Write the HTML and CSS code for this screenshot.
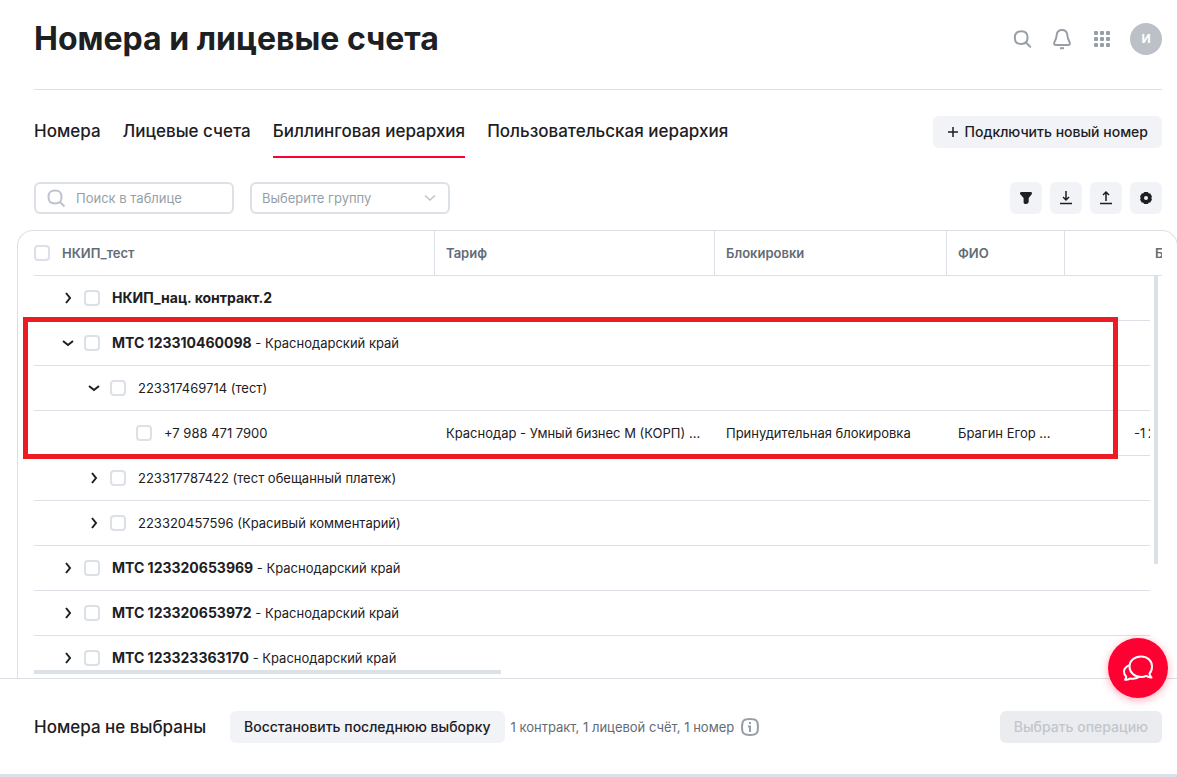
FILE: index.html
```html
<!DOCTYPE html>
<html lang="ru">
<head>
<meta charset="utf-8">
<title>Номера и лицевые счета</title>
<link rel="stylesheet" href="styles.css">
</head>
<body>
<div class="page">
  <header class="header">
    <h1 class="title">Номера и лицевые счета</h1>
    <div class="header-actions">
      <button class="icon-link" type="button" aria-label="Поиск">
        <svg width="24" height="24" viewBox="0 0 24 24" fill="none" stroke="#969fa8" stroke-width="2"><path d="M11.200 4.200c4.600 0 6.400 1.800 6.400 6.400s-1.800 6.400-6.400 6.400-6.400-1.800-6.400-6.400 1.800-6.400 6.400-6.400z"/><path d="M16 15.500l4.200 4.200" stroke-linecap="round"/></svg>
      </button>
      <button class="icon-link" type="button" aria-label="Уведомления">
        <svg width="24" height="24" viewBox="0 0 24 24" fill="none" stroke="#969fa8" stroke-width="2"><path d="M12 3c-3.500 0-5 2-5.300 5-.3 3.200-.9 4.500-2 6.400-1.200 2.200-.6 3.600 1.500 3.600h11.600c2.100 0 2.700-1.400 1.500-3.600-1.100-1.900-1.700-3.200-2-6.400-.3-3-1.800-5-5.300-5z"/><path d="M10 21.200h4"/></svg>
      </button>
      <button class="icon-link" type="button" aria-label="Сервисы">
        <svg width="24" height="24" viewBox="0 0 24 24" fill="#969fa8"><rect x="4" y="4" width="4" height="4" rx="1"/><rect x="10" y="4" width="4" height="4" rx="1"/><rect x="16" y="4" width="4" height="4" rx="1"/><rect x="4" y="10" width="4" height="4" rx="1"/><rect x="10" y="10" width="4" height="4" rx="1"/><rect x="16" y="10" width="4" height="4" rx="1"/><rect x="4" y="16" width="4" height="4" rx="1"/><rect x="10" y="16" width="4" height="4" rx="1"/><rect x="16" y="16" width="4" height="4" rx="1"/></svg>
      </button>
      <button class="avatar" type="button">И</button>
    </div>
  </header>

  <div class="nav-row">
    <nav class="tabs">
      <a class="tab" href="#numbers">Номера</a>
      <a class="tab" href="#accounts">Лицевые счета</a>
      <a class="tab tab-active" href="#billing" aria-current="page">Биллинговая иерархия</a>
      <a class="tab" href="#users">Пользовательская иерархия</a>
    </nav>
    <button class="button" type="button">
      <svg width="12" height="12" viewBox="0 0 12 12" stroke="#1d2023" stroke-width="1.500"><path d="M6 1v10M1 6h10"/></svg>
      Подключить новый номер
    </button>
  </div>

  <div class="toolbar">
    <label class="search">
      <svg width="20" height="20" viewBox="0 0 20 20" fill="none" stroke="#bcc3d0" stroke-width="2"><path d="M9 2.500c4.800 0 6.500 1.700 6.500 6.500s-1.700 6.500-6.500 6.500-6.500-1.700-6.500-6.500 1.700-6.500 6.500-6.500z"/><path d="M14 14l4.500 4.500"/></svg>
      <input class="search-input" type="text" placeholder="Поиск в таблице" aria-label="Поиск в таблице">
    </label>
    <div class="select-box">
      <select class="select" aria-label="Группа"><option>Выберите группу</option></select>
      <svg class="select-arrow" width="12" height="8" viewBox="0 0 12 8" fill="none" stroke="#bcc3d0" stroke-width="1.500"><path d="M1 1.500l5 4.500 5-4.500"/></svg>
    </div>
    <div class="tools">
      <button class="tool" type="button" aria-label="Фильтр"><svg width="16" height="16" viewBox="0 0 16 16" fill="#1d2023"><path d="M3.500 2h9c1.600 0 2 1.300 1 2.500L10.700 8v3.500c0 1.500-1 2.500-2.700 2.500-1.900 0-2.400-.6-2.400-2V8L2.500 4.500C1.500 3.300 1.900 2 3.500 2z"/></svg></button>
      <button class="tool" type="button" aria-label="Скачать"><svg width="16" height="16" viewBox="0 0 16 16" fill="none" stroke="#1d2023" stroke-width="1.500"><path d="M8 1v9M5 7l3 3 3-3M2 13.500h12"/></svg></button>
      <button class="tool" type="button" aria-label="Загрузить"><svg width="16" height="16" viewBox="0 0 16 16" fill="none" stroke="#1d2023" stroke-width="1.500"><path d="M8 11V2M5 5l3-3 3 3M2 13.500h12"/></svg></button>
      <button class="tool" type="button" aria-label="Настройки"><svg width="16" height="16" viewBox="0 0 16 16" fill="#1d2023" fill-rule="evenodd"><path d="M6.300 2h3.400l1 1.200 1.500.2 1.700 2.900-.5 1.700.5 1.700-1.700 2.900-1.500.2-1 1.200H6.300l-1-1.200-1.500-.2-1.700-2.900.5-1.700-.5-1.700 1.700-2.900 1.500-.2zM8 6a2 2 0 1 0 0 4 2 2 0 0 0 0-4z"/></svg></button>
    </div>
  </div>

  <main class="panel">
    <div class="table-view">
      <table class="table">
        <colgroup><col class="col-name"><col class="col-tariff"><col class="col-block"><col class="col-person"><col><col class="col-gutter"></colgroup>
        <thead>
          <tr>
            <th><label class="node"><input class="check" type="checkbox"><span>НКИП_тест</span></label></th>
            <th>Тариф</th>
            <th>Блокировки</th>
            <th>ФИО</th>
            <th class="balance-head" colspan="2">Б</th>
          </tr>
        </thead>
        <tbody>
          <tr>
            <td><div class="node level-1"><button class="toggle" type="button" aria-label="Развернуть"><svg width="12" height="12" viewBox="0 0 12 12"><path d="M4 1l4 5-4 5"/></svg></button><label class="node"><input class="check" type="checkbox"><b>НКИП_нац. контракт.2</b></label></div></td>
            <td></td><td></td><td></td><td></td>
            <td class="gutter" rowspan="9"><div class="thumb-y"></div></td>
          </tr>
          <tr>
            <td><div class="node level-1"><button class="toggle" type="button" aria-label="Свернуть"><svg width="12" height="12" viewBox="0 0 12 12"><path d="M1 4l5 4 5-4"/></svg></button><label class="node"><input class="check" type="checkbox"><span><b>МТС 123310460098</b> - Краснодарский край</span></label></div></td>
            <td></td><td></td><td></td><td></td>
          </tr>
          <tr>
            <td><div class="node level-2"><button class="toggle" type="button" aria-label="Свернуть"><svg width="12" height="12" viewBox="0 0 12 12"><path d="M1 4l5 4 5-4"/></svg></button><label class="node"><input class="check" type="checkbox"><span>223317469714 (тест)</span></label></div></td>
            <td></td><td></td><td></td><td></td>
          </tr>
          <tr>
            <td><label class="node level-3"><input class="check" type="checkbox"><span>+7 988 471 7900</span></label></td>
            <td>Краснодар - Умный бизнес М (КОРП) ...</td>
            <td>Принудительная блокировка</td>
            <td>Брагин Егор ...</td>
            <td class="balance">-1&thinsp;2</td>
          </tr>
          <tr>
            <td><div class="node level-2"><button class="toggle" type="button" aria-label="Развернуть"><svg width="12" height="12" viewBox="0 0 12 12"><path d="M4 1l4 5-4 5"/></svg></button><label class="node"><input class="check" type="checkbox"><span>223317787422 (тест обещанный платеж)</span></label></div></td>
            <td></td><td></td><td></td><td></td>
          </tr>
          <tr>
            <td><div class="node level-2"><button class="toggle" type="button" aria-label="Развернуть"><svg width="12" height="12" viewBox="0 0 12 12"><path d="M4 1l4 5-4 5"/></svg></button><label class="node"><input class="check" type="checkbox"><span>223320457596 (Красивый комментарий)</span></label></div></td>
            <td></td><td></td><td></td><td></td>
          </tr>
          <tr>
            <td><div class="node level-1"><button class="toggle" type="button" aria-label="Развернуть"><svg width="12" height="12" viewBox="0 0 12 12"><path d="M4 1l4 5-4 5"/></svg></button><label class="node"><input class="check" type="checkbox"><span><b>МТС 123320653969</b> - Краснодарский край</span></label></div></td>
            <td></td><td></td><td></td><td></td>
          </tr>
          <tr>
            <td><div class="node level-1"><button class="toggle" type="button" aria-label="Развернуть"><svg width="12" height="12" viewBox="0 0 12 12"><path d="M4 1l4 5-4 5"/></svg></button><label class="node"><input class="check" type="checkbox"><span><b>МТС 123320653972</b> - Краснодарский край</span></label></div></td>
            <td></td><td></td><td></td><td></td>
          </tr>
          <tr>
            <td><div class="node level-1"><button class="toggle" type="button" aria-label="Развернуть"><svg width="12" height="12" viewBox="0 0 12 12"><path d="M4 1l4 5-4 5"/></svg></button><label class="node"><input class="check" type="checkbox"><span><b>МТС 123323363170</b> - Краснодарский край</span></label></div></td>
            <td></td><td></td><td></td><td></td>
          </tr>
        </tbody>
      </table>
    </div>
    <div class="track-x"><div class="thumb-x"></div></div>
    <div class="highlight"></div>
  </main>

  <footer class="footer">
    <div class="footer-status">Номера не выбраны</div>
    <button class="button" type="button">Восстановить последнюю выборку</button>
    <div class="summary">
      <span>1 контракт, 1 лицевой счёт, 1 номер</span>
      <svg width="20" height="20" viewBox="0 0 20 20" fill="none" stroke="#969fa8" stroke-width="2"><path d="M10 2c6.400 0 8 1.600 8 8s-1.600 8-8 8-8-1.600-8-8 1.600-8 8-8z"/><path d="M8 9.500h2V15M9 6h2"/></svg>
    </div>
    <button class="button button-disabled" type="button" disabled>Выбрать операцию</button>
  </footer>
  <button class="chat" type="button" aria-label="Чат">
    <svg width="32" height="32" viewBox="0 0 32 32" fill="none" stroke="#fff" stroke-width="2" stroke-linejoin="round"><path d="M27.500 21.500c2-2 2.500-4.500 2.500-7C30 8.500 25.300 4.500 19 4.500S7.500 8.500 7.500 14.500 12.700 25 19 25c2 0 3.800-.4 5.400-1.100 1.500 1.100 3.200 1.700 5.100 1.600-1.200-1.100-1.800-2.500-2-4z"/><path d="M7.800 13C4 14.500 2 17 2 19.500c0 2 .8 3.700 2.200 5 0 1.200-.5 2.300-1.200 3.300 2 .2 3.500-.2 5-1.300 3.500.8 6.500.2 9-1.600"/></svg>
  </button>
</div>
</body>
</html>
```
FILE: styles.css
```css
* {
  box-sizing: border-box;
}

body {
  margin: 0;
  overflow: hidden;
  background: #fff;
  color: #1d2023;
  font: 400 13px/20px Inter, "Noto Sans", sans-serif;
}

button,
input,
select {
  font: inherit;
  color: inherit;
}

button {
  border: 0;
  padding: 0;
  background: none;
  cursor: pointer;
}

svg {
  display: block;
  flex: none;
}

.page {
  display: flex;
  flex-direction: column;
  height: 100vh;
  border-bottom: 3px solid #dce0e7;
}

.header {
  display: flex;
  align-items: center;
  justify-content: space-between;
  height: 90px;
  margin: 0 15px 0 34px;
  padding-bottom: 11px;
  border-bottom: 1px solid #dcdfe6;
}

.title {
  margin: 0;
  font-size: 32px;
  line-height: 40px;
  font-weight: 700;
}

.header-actions {
  display: flex;
  align-items: center;
  gap: 16px;
}

.avatar {
  width: 32px;
  height: 32px;
  border-radius: 50%;
  background: #bbc1c7;
  color: #fff;
  font-size: 12px;
  font-weight: 700;
}

.nav-row {
  display: flex;
  align-items: flex-start;
  justify-content: space-between;
  margin: 26px 15px 0 34px;
}

.tabs {
  display: flex;
  gap: 22px;
}

.tab {
  padding: 4px 0 14px;
  border-bottom: 2px solid transparent;
  color: inherit;
  font-size: 17px;
  line-height: 22px;
  font-weight: 500;
  text-decoration: none;
  white-space: nowrap;
}

.tab-active {
  border-color: #ff0032;
}

.button {
  display: flex;
  align-items: center;
  gap: 6px;
  height: 32px;
  padding: 0 14px;
  border-radius: 6px;
  background: #f2f3f7;
  font-size: 14px;
  font-weight: 500;
  white-space: nowrap;
}

.button-disabled {
  margin-left: auto;
  background: #ebecf0;
  color: #c2c6cc;
}

.toolbar {
  display: flex;
  gap: 16px;
  margin: 24px 15px 16px 34px;
}

.search,
.select-box {
  display: flex;
  align-items: center;
  width: 200px;
  height: 32px;
  border: 2px solid #dce0e7;
  border-radius: 6px;
}

.search {
  gap: 10px;
  padding: 0 10px;
}

.search-input {
  width: 100%;
  min-width: 0;
  border: 0;
  padding: 0;
  outline: 0;
  background: none;
}

.search-input::placeholder {
  color: #969fa8;
  opacity: 1;
}

.select-box {
  position: relative;
}

.select {
  width: 100%;
  height: 100%;
  border: 0;
  padding: 0 10px;
  appearance: none;
  background: none;
  color: #969fa8;
}

.select-arrow {
  position: absolute;
  right: 12px;
  pointer-events: none;
}

.tools {
  display: flex;
  gap: 8px;
  margin-left: auto;
}

.tool {
  display: grid;
  place-items: center;
  width: 32px;
  height: 32px;
  border-radius: 6px;
  background: #f2f3f7;
}

.panel {
  position: relative;
  display: flex;
  flex: 1;
  flex-direction: column;
  min-height: 0;
  margin: 0 -1px 0 17px;
  padding: 0 15px 4px 16px;
  border: 1px solid #dcdfe6;
  border-bottom: 0;
  border-radius: 16px 16px 0 0;
}

.table-view {
  flex: 1;
  min-height: 0;
  overflow: hidden;
}

.table {
  width: 100%;
  border-collapse: separate;
  border-spacing: 0;
  table-layout: fixed;
}

.col-name { width: 401px; }
.col-tariff { width: 280px; }
.col-block { width: 232px; }
.col-person { width: 118px; }
.col-gutter { width: 12px; }

.table th,
.table td {
  height: 45px;
  padding: 0 11px;
  border-bottom: 1px solid #dcdfe6;
  overflow: hidden;
  text-align: left;
  white-space: nowrap;
}

.table th {
  border-right: 1px solid #dcdfe6;
  color: #626c77;
  font-size: 13px;
  font-weight: 600;
}

.table th:first-child,
.table td:first-child {
  padding: 0;
}

.table th.balance-head {
  padding-left: 90px;
  padding-right: 0;
  border-right: 0;
}

.table td.balance {
  padding-left: 69px;
  padding-right: 0;
}

.table td.gutter {
  padding: 0 4px;
  border-bottom: 0;
  vertical-align: top;
}

.node {
  display: flex;
  align-items: center;
  gap: 12px;
}

.node b {
  font-size: 14px;
}

.level-1 { padding-left: 28px; }
.level-2 { padding-left: 54px; }
.level-3 { padding-left: 102px; }

.level-1,
.level-2 {
  gap: 10px;
}

.toggle svg {
  fill: none;
  stroke: #1d2023;
  stroke-width: 2;
}

.check {
  flex: none;
  width: 16px;
  height: 16px;
  margin: 0;
  appearance: none;
  border: 2px solid #dce0e7;
  border-radius: 4px;
  background: #fff;
}

.thumb-y {
  width: 4px;
  height: 288px;
  background: #dce0e7;
}

.thumb-x {
  width: 41.4%;
  height: 4px;
  background: #dce0e7;
}

.highlight {
  position: absolute;
  top: 86px;
  right: 59px;
  left: 5px;
  height: 142px;
  border: 5px solid #ed1c24;
  pointer-events: none;
}

.footer {
  display: flex;
  align-items: center;
  height: 96px;
  padding: 0 15px 0 34px;
  border-top: 1px solid #dcdfe6;
}

.footer-status {
  min-width: 196px;
  font-size: 17px;
  font-weight: 500;
}

.summary {
  display: flex;
  align-items: center;
  gap: 6px;
  margin-left: 6px;
  color: #626c77;
}

.chat {
  position: fixed;
  right: 9px;
  bottom: 79px;
  display: grid;
  place-items: center;
  width: 60px;
  height: 60px;
  border-radius: 50%;
  background: #ff0032;
  box-shadow: 0 2px 8px rgba(255, 0, 50, 0.35);
}
```
